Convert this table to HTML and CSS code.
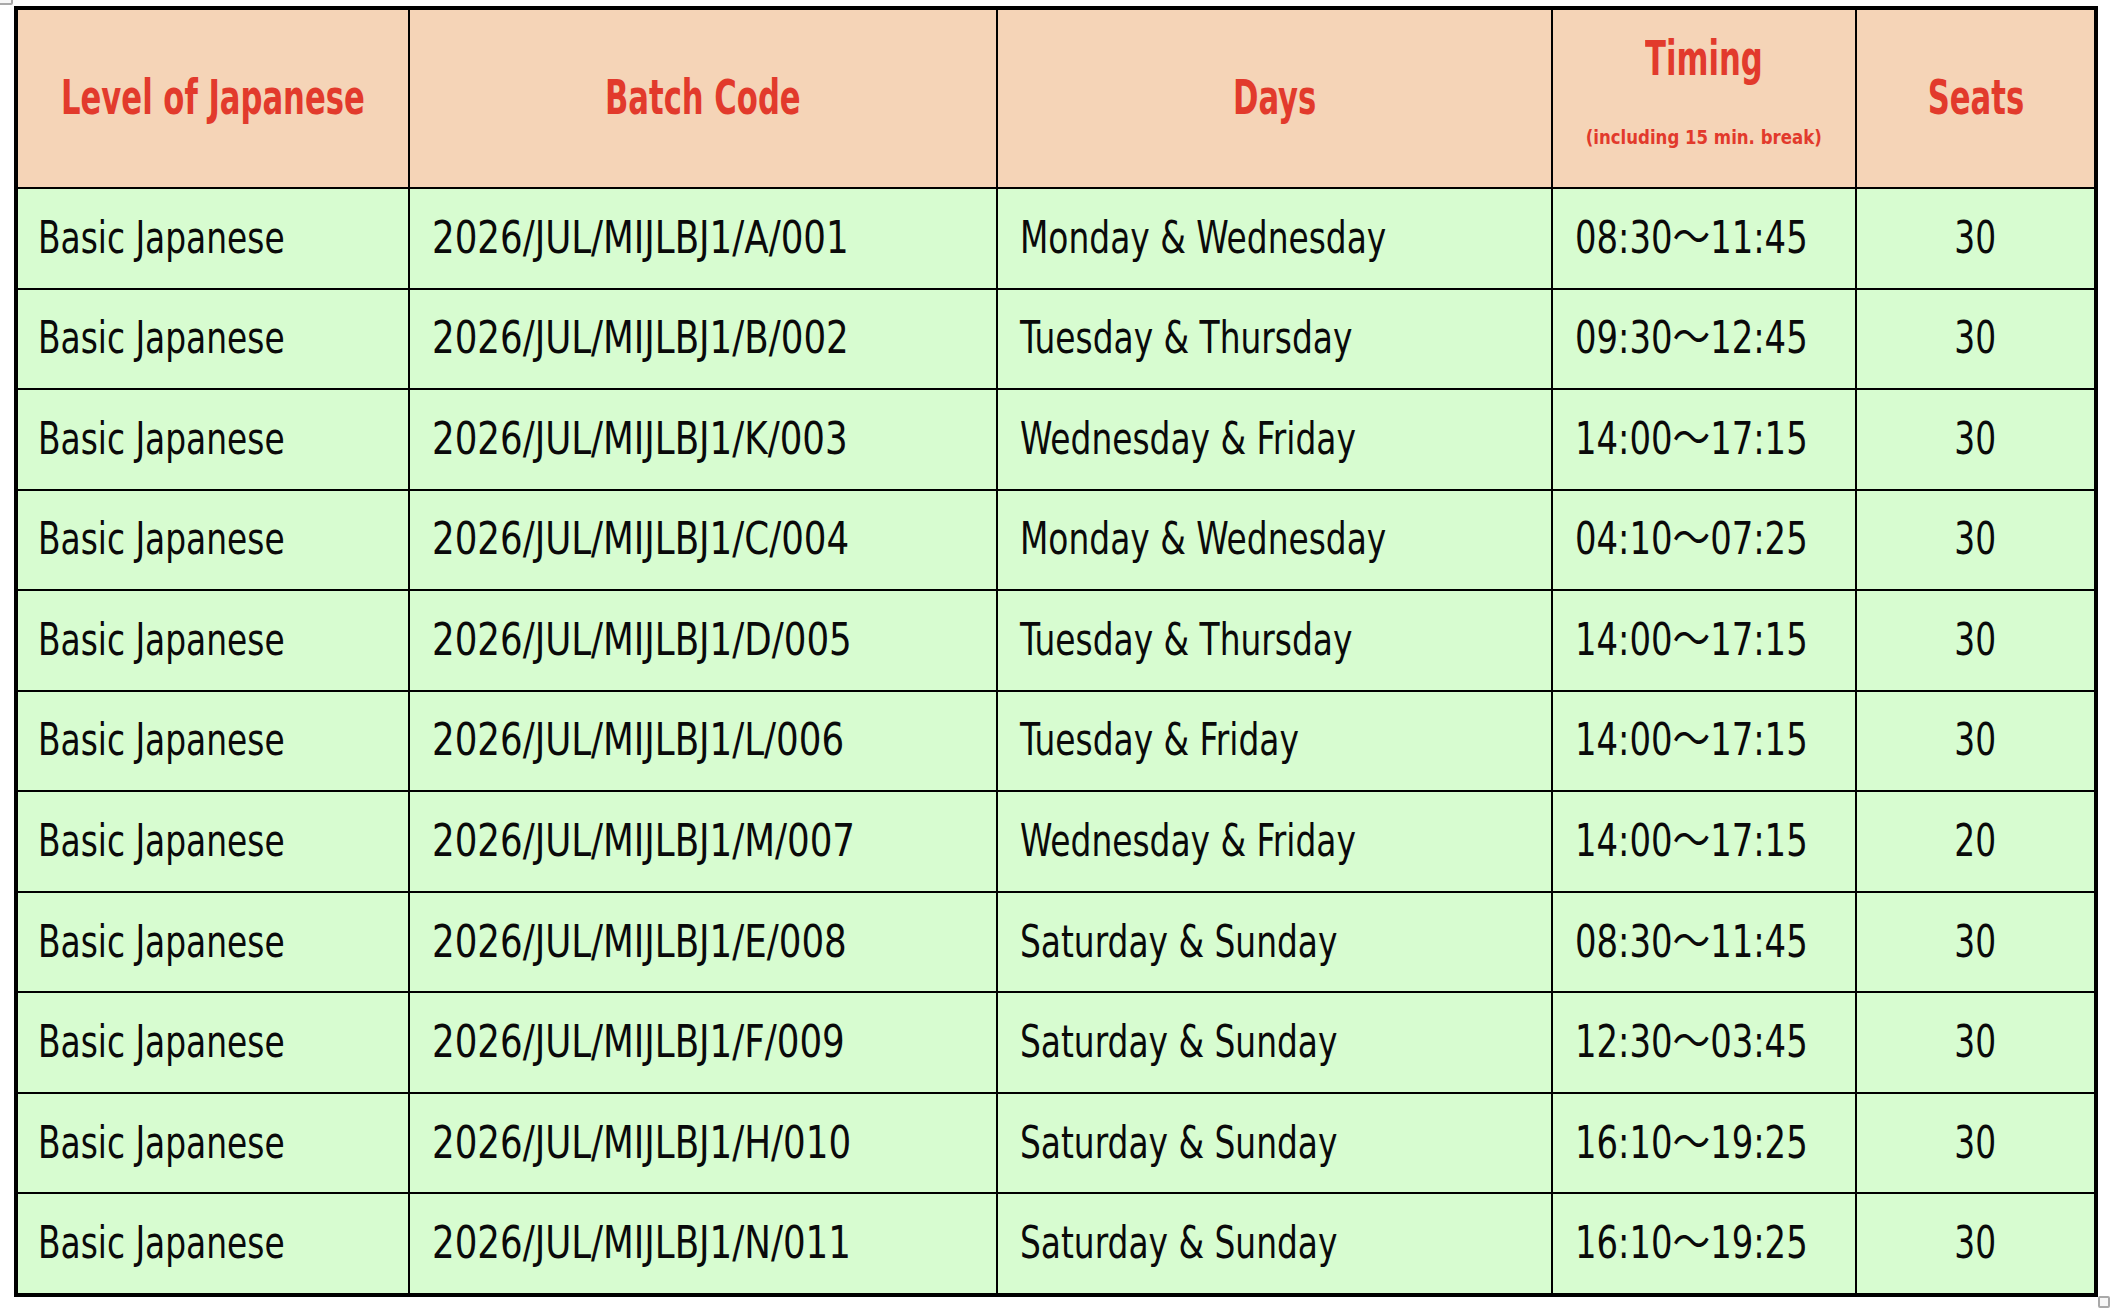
FILE: index.html
```html
<!DOCTYPE html>
<html lang="en">
<head>
<meta charset="utf-8">
<title>Basic Japanese Batches</title>
<link rel="stylesheet" href="styles.css">
</head>
<body>
<span class="handle handle-tl"></span>
<div class="schedule" role="table">
  <div class="hcell" role="columnheader"><span class="ht">Level of Japanese</span></div>
  <div class="hcell" role="columnheader"><span class="ht">Batch Code</span></div>
  <div class="hcell" role="columnheader"><span class="ht">Days</span></div>
  <div class="hcell hcell-timing" role="columnheader"><span class="ht">Timing</span><span class="hsub">(including 15 min. break)</span></div>
  <div class="hcell" role="columnheader"><span class="ht">Seats</span></div>

  <div class="cell cell-first"><span class="t">Basic Japanese</span></div>
  <div class="cell"><span class="t t-code">2026/JUL/MIJLBJ1/A/001</span></div>
  <div class="cell"><span class="t">Monday &amp; Wednesday</span></div>
  <div class="cell"><span class="t t-time">08:30～11:45</span></div>
  <div class="cell cell-c"><span class="t">30</span></div>

  <div class="cell cell-first"><span class="t">Basic Japanese</span></div>
  <div class="cell"><span class="t t-code">2026/JUL/MIJLBJ1/B/002</span></div>
  <div class="cell"><span class="t">Tuesday &amp; Thursday</span></div>
  <div class="cell"><span class="t t-time">09:30～12:45</span></div>
  <div class="cell cell-c"><span class="t">30</span></div>

  <div class="cell cell-first"><span class="t">Basic Japanese</span></div>
  <div class="cell"><span class="t t-code">2026/JUL/MIJLBJ1/K/003</span></div>
  <div class="cell"><span class="t">Wednesday &amp; Friday</span></div>
  <div class="cell"><span class="t t-time">14:00～17:15</span></div>
  <div class="cell cell-c"><span class="t">30</span></div>

  <div class="cell cell-first"><span class="t">Basic Japanese</span></div>
  <div class="cell"><span class="t t-code">2026/JUL/MIJLBJ1/C/004</span></div>
  <div class="cell"><span class="t">Monday &amp; Wednesday</span></div>
  <div class="cell"><span class="t t-time">04:10～07:25</span></div>
  <div class="cell cell-c"><span class="t">30</span></div>

  <div class="cell cell-first"><span class="t">Basic Japanese</span></div>
  <div class="cell"><span class="t t-code">2026/JUL/MIJLBJ1/D/005</span></div>
  <div class="cell"><span class="t">Tuesday &amp; Thursday</span></div>
  <div class="cell"><span class="t t-time">14:00～17:15</span></div>
  <div class="cell cell-c"><span class="t">30</span></div>

  <div class="cell cell-first"><span class="t">Basic Japanese</span></div>
  <div class="cell"><span class="t t-code">2026/JUL/MIJLBJ1/L/006</span></div>
  <div class="cell"><span class="t">Tuesday &amp; Friday</span></div>
  <div class="cell"><span class="t t-time">14:00～17:15</span></div>
  <div class="cell cell-c"><span class="t">30</span></div>

  <div class="cell cell-first"><span class="t">Basic Japanese</span></div>
  <div class="cell"><span class="t t-code">2026/JUL/MIJLBJ1/M/007</span></div>
  <div class="cell"><span class="t">Wednesday &amp; Friday</span></div>
  <div class="cell"><span class="t t-time">14:00～17:15</span></div>
  <div class="cell cell-c"><span class="t">20</span></div>

  <div class="cell cell-first"><span class="t">Basic Japanese</span></div>
  <div class="cell"><span class="t t-code">2026/JUL/MIJLBJ1/E/008</span></div>
  <div class="cell"><span class="t">Saturday &amp; Sunday</span></div>
  <div class="cell"><span class="t t-time">08:30～11:45</span></div>
  <div class="cell cell-c"><span class="t">30</span></div>

  <div class="cell cell-first"><span class="t">Basic Japanese</span></div>
  <div class="cell"><span class="t t-code">2026/JUL/MIJLBJ1/F/009</span></div>
  <div class="cell"><span class="t">Saturday &amp; Sunday</span></div>
  <div class="cell"><span class="t t-time">12:30～03:45</span></div>
  <div class="cell cell-c"><span class="t">30</span></div>

  <div class="cell cell-first"><span class="t">Basic Japanese</span></div>
  <div class="cell"><span class="t t-code">2026/JUL/MIJLBJ1/H/010</span></div>
  <div class="cell"><span class="t">Saturday &amp; Sunday</span></div>
  <div class="cell"><span class="t t-time">16:10～19:25</span></div>
  <div class="cell cell-c"><span class="t">30</span></div>

  <div class="cell cell-first"><span class="t">Basic Japanese</span></div>
  <div class="cell"><span class="t t-code">2026/JUL/MIJLBJ1/N/011</span></div>
  <div class="cell"><span class="t">Saturday &amp; Sunday</span></div>
  <div class="cell"><span class="t t-time">16:10～19:25</span></div>
  <div class="cell cell-c"><span class="t">30</span></div>
</div>
<span class="handle handle-br"></span>
</body>
</html>
```

FILE: styles.css
```css
html, body {
  margin: 0;
  height: 100%;
  overflow: hidden;
  background: #ffffff;
}

body {
  position: relative;
  padding: 6px 0 0 14px;
  box-sizing: border-box;
  font-family: "DejaVu Sans Condensed", "DejaVu Sans", "Noto Sans CJK JP", sans-serif;
}

.schedule {
  display: grid;
  grid-template-columns: 390px 586px 553px 302px 237px;
  grid-template-rows: 177px repeat(11, 1fr);
  gap: 2px;
  width: 2084px;
  height: 1291px;
  box-sizing: border-box;
  border: 4px solid #000;
  background: #000;
}

.hcell {
  display: flex;
  align-items: center;
  justify-content: center;
  background: #f5d4b7;
  color: #e23a2c;
  font-weight: bold;
  padding-bottom: 3px;
  box-sizing: border-box;
}

.ht {
  display: inline-block;
  font-size: 48px;
  line-height: 56px;
  white-space: nowrap;
  transform: scaleX(0.71);
  transform-origin: center center;
}

.hcell-timing {
  flex-direction: column;
  justify-content: flex-start;
  padding: 20px 0 0 0;
}

.hsub {
  display: inline-block;
  margin-top: 40px;
  font-size: 19px;
  line-height: 22px;
  white-space: nowrap;
  transform: scaleX(0.97);
}

.cell {
  display: flex;
  align-items: center;
  padding: 0 0 2px 22px;
  box-sizing: border-box;
  background: #d7fcd0;
  color: #0a0a0a;
}

.cell-first {
  padding-left: 20px;
}

.t {
  display: inline-block;
  font-size: 44px;
  line-height: 51px;
  white-space: nowrap;
  transform: scaleX(0.83);
  transform-origin: left center;
}

.t-code {
  transform: scaleX(0.9);
}

.t-time {
  transform: scaleX(0.855);
}

.cell-c {
  justify-content: center;
  padding-left: 0;
}

.cell-c .t {
  transform-origin: center center;
}

.handle {
  position: absolute;
  box-sizing: border-box;
  border: 2px solid #a9a9a9;
  border-radius: 2px;
  background: #f7f7f7;
}

.handle-tl {
  left: -2px;
  top: -8px;
  width: 15px;
  height: 13px;
}

.handle-br {
  left: 2098px;
  top: 1296px;
  width: 12px;
  height: 12px;
}
```
